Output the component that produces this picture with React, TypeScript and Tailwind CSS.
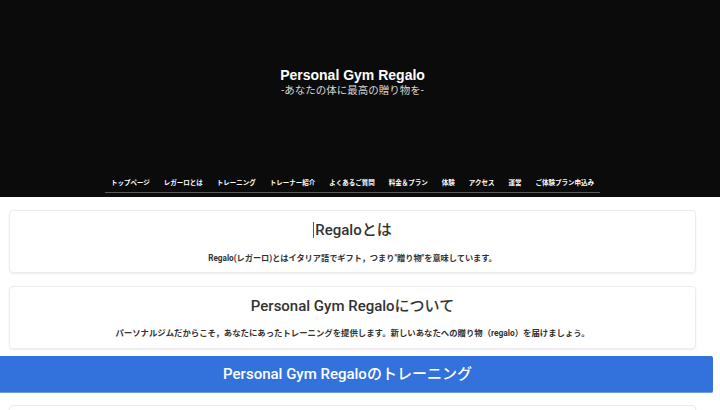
const navItems = [
  'トップページ',
  'レガーロとは',
  'トレーニング',
  'トレーナー紹介',
  'よくあるご質問',
  '料金＆プラン',
  '体験',
  'アクセス',
  '運営',
  'ご体験プラン申込み',
];

const font = { fontFamily: 'Roboto, "Noto Sans CJK JP", sans-serif' };

export default function App() {
  return (
    <div className="h-[410px] bg-white overflow-hidden" style={font}>
      {/* Hero */}
      <header className="h-[197px] bg-[#0b0b0b] w-[720px] flex flex-col">
        <div className="w-[705px] flex flex-col items-center pt-[67px]">
          <h1 className="text-white text-[14px] font-bold leading-[16px]" style={{ fontFamily: '"Liberation Sans", "Noto Sans CJK JP", sans-serif' }}>
            Personal Gym Regalo
          </h1>
          <p className="text-[#d6d6d6] text-[10.5px] leading-[13px] mt-[1px]">-あなたの体に最高の贈り物を-</p>
        </div>
        <nav className="w-[705px] mt-auto mb-[4px] flex justify-center">
          <ul className="flex gap-[14px] px-[6px] pb-[4px] border-b border-[#5a5a5a]">
            {navItems.map((item) => (
              <li key={item} className="text-white text-[6.5px] font-bold leading-[10px] whitespace-nowrap">
                {item}
              </li>
            ))}
          </ul>
        </nav>
      </header>

      {/* Content */}
      <main className="w-[713px] pt-[13px] flex flex-col">
        <section className="ml-[9px] w-[687px] h-[63px] rounded-[4px] border border-[#ececec] shadow-[0_1px_2px_rgba(0,0,0,0.08)] flex flex-col items-center pt-[8px]">
          <h2 className="text-[#333] text-[15px] font-medium leading-[22px] flex items-center">
            <span className="inline-block w-px h-[16px] bg-[#555] mr-[1px]" />
            Regaloとは
          </h2>
          <p className="text-[#333] text-[8.2px] font-bold mt-[12px] leading-[10px]">
            Regalo(レガーロ)とはイタリア語でギフト，つまり"贈り物"を意味しています。
          </p>
        </section>

        <section className="ml-[9px] mt-[13px] w-[687px] h-[63px] rounded-[4px] border border-[#ececec] shadow-[0_1px_2px_rgba(0,0,0,0.08)] flex flex-col items-center pt-[8px]">
          <h2 className="text-[#333] text-[15px] font-medium leading-[22px]">Personal Gym Regaloについて</h2>
          <p className="text-[#333] text-[8.4px] font-bold mt-[11px] leading-[10px]">
            パーソナルジムだからこそ，あなたにあったトレーニングを提供します。新しいあなたへの贈り物（regalo）を届けましょう。
          </p>
        </section>

        <div className="mt-[7px] h-[37px] bg-[#3372dc] rounded-r-[2px] flex items-center justify-center pr-[18px] border-b border-[#6d9be6]">
          <h2 className="text-white text-[15px] font-medium">Personal Gym Regaloのトレーニング</h2>
        </div>

        <section className="ml-[9px] mt-[12px] w-[687px] h-[60px] rounded-[4px] border border-[#ececec] shadow-[0_1px_2px_rgba(0,0,0,0.08)]" />
      </main>
    </div>
  );
}
